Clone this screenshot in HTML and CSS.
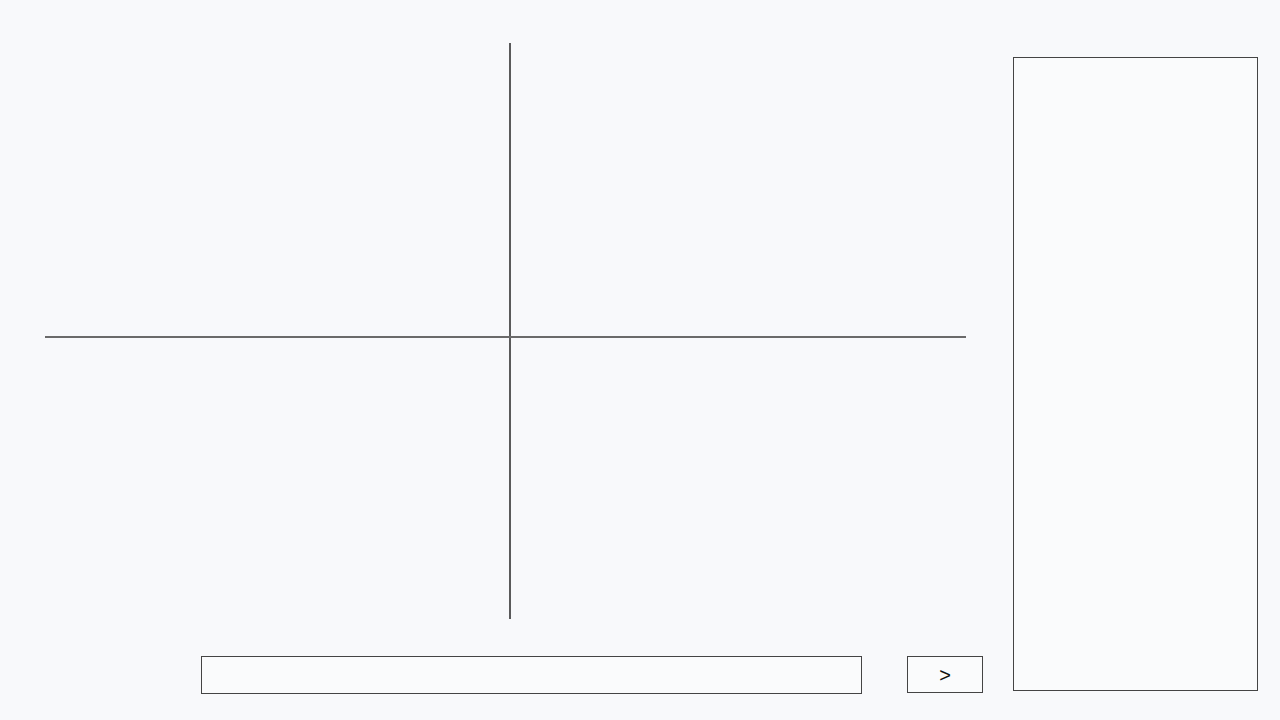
FILE: index.html
```html
<!DOCTYPE html>
<html lang="en">
<head>
<meta charset="utf-8">
<title>Wireframe</title>
<link rel="stylesheet" href="styles.css">
</head>
<body>
<div class="app">
  <main class="main">
    <div class="chart">
      <div class="axis-y"></div>
      <div class="axis-x"></div>
    </div>
    <div class="input-row">
      <div class="text-input"></div>
      <button class="send">&gt;</button>
    </div>
  </main>
  <aside class="panel"></aside>
</div>
</body>
</html>
```
FILE: styles.css
```css
html, body {
  margin: 0;
  padding: 0;
  background: #f8f9fb;
  font-family: "Liberation Sans", Arial, sans-serif;
}

.app {
  display: flex;
  width: 1280px;
  height: 720px;
  box-sizing: border-box;
}

.main {
  width: 990px;
  display: flex;
  flex-direction: column;
}

.chart {
  margin: 43px 0 0 45px;
  width: 921px;
  height: 576px;
  display: grid;
  grid-template-columns: 464px 2px 1fr;
  grid-template-rows: 293px 2px 1fr;
}

.axis-y {
  grid-column: 2;
  grid-row: 1 / 4;
  background: #5a5a5a;
  width: 1.5px;
}

.axis-x {
  grid-column: 1 / 4;
  grid-row: 2;
  background: #6a6a6a;
  height: 1.5px;
}

.input-row {
  display: flex;
  align-items: flex-start;
  gap: 45px;
  margin: 37px 0 0 201px;
}

.text-input {
  width: 661px;
  height: 38px;
  box-sizing: border-box;
  border: 1.5px solid #444;
  background: #fafbfc;
}

.send {
  width: 76px;
  height: 37px;
  box-sizing: border-box;
  border: 1.5px solid #444;
  background: #fafbfc;
  padding: 0;
  font-family: "Liberation Sans", Arial, sans-serif;
  font-size: 20px;
  color: #111;
  line-height: 1;
}

.panel {
  margin: 57px 0 0 23px;
  width: 245px;
  height: 634px;
  box-sizing: border-box;
  border: 1.5px solid #444;
  background: #fafbfc;
}
```
